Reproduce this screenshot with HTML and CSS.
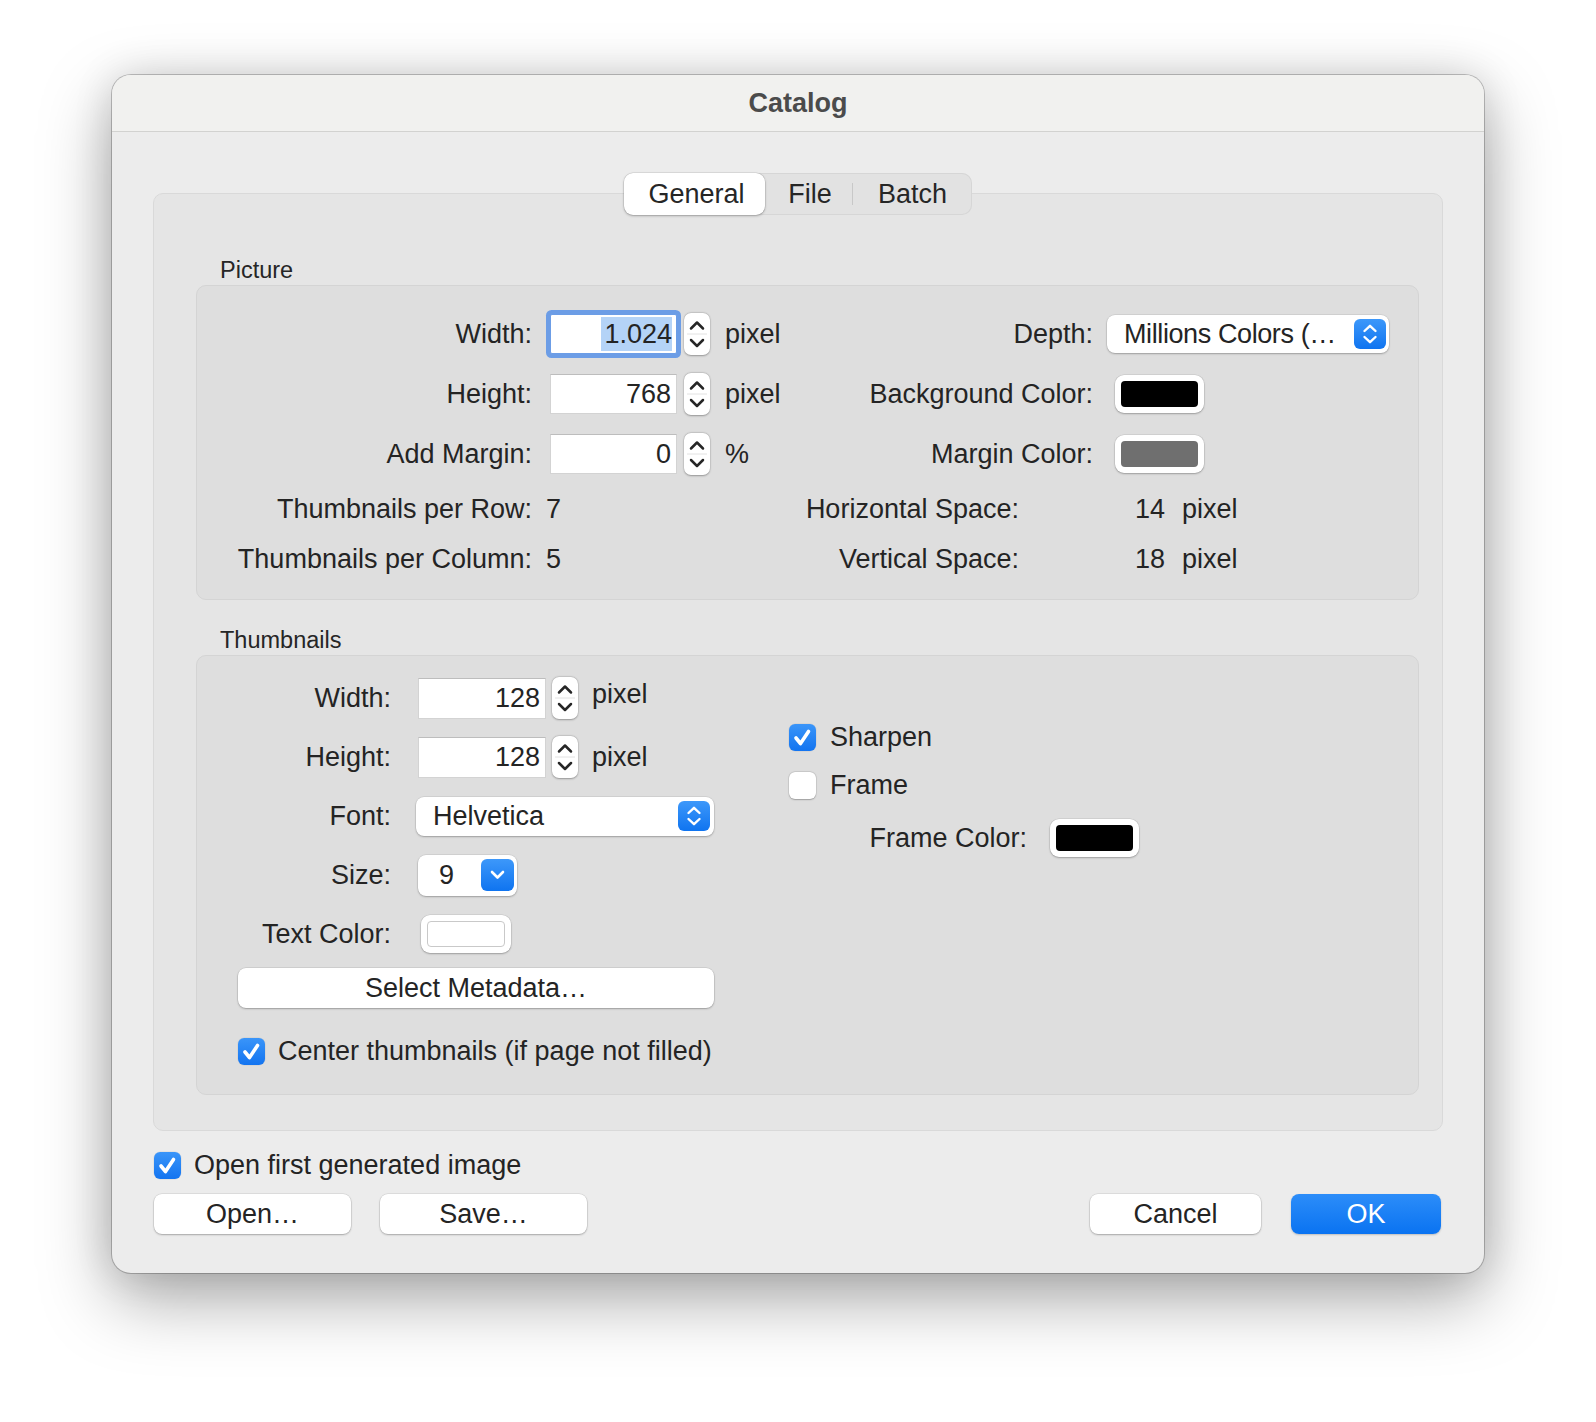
FILE: index.html
```html
<!DOCTYPE html>
<html>
<head>
<meta charset="utf-8">
<title>Catalog</title>
<link rel="stylesheet" href="styles.css">
</head>
<body>
<div class="window">
  <div class="titlebar">Catalog</div>
  <div class="content">
    <div class="tabs">
      <div class="seg">
        <div class="segitem sel">General</div>
        <div class="segitem file">File</div>
        <div class="segsep"></div>
        <div class="segitem batch">Batch</div>
      </div>
    </div>
    <div class="tabbox">
      <div class="glabel">Picture</div>
      <div class="group picture">
        <div class="prow">
          <div class="cell">
            <span class="lab lab-pl">Width:</span>
            <div class="input pin focused"><span class="seltext">1.024</span></div>
            <div class="stepper"><svg width="26" height="42" viewBox="0 0 26 42"><line x1="3" y1="21" x2="23" y2="21" stroke="#e2e2e2" stroke-width="1"/><path d="M7 15.5 L13 9.5 L19 15.5" fill="none" stroke="#262626" stroke-width="2.5" stroke-linecap="round" stroke-linejoin="round"/><path d="M7 27 L13 33 L19 27" fill="none" stroke="#262626" stroke-width="2.5" stroke-linecap="round" stroke-linejoin="round"/></svg></div>
            <span class="unit">pixel</span>
          </div>
          <div class="cell">
            <span class="lab lab-pr">Depth:</span>
            <div class="popup depth"><span class="poptext">Millions Colors (…</span><span class="popbtn"><svg width="32" height="30" viewBox="0 0 32 30"><path d="M10.5 12 L16 6.8 L21.5 12" fill="none" stroke="#fff" stroke-width="2.4" stroke-linecap="round" stroke-linejoin="round"/><path d="M10.5 18 L16 23.2 L21.5 18" fill="none" stroke="#fff" stroke-width="2.4" stroke-linecap="round" stroke-linejoin="round"/></svg></span></div>
          </div>
        </div>
        <div class="prow">
          <div class="cell">
            <span class="lab lab-pl">Height:</span>
            <div class="input pin"><span class="val">768</span></div>
            <div class="stepper"><svg width="26" height="42" viewBox="0 0 26 42"><line x1="3" y1="21" x2="23" y2="21" stroke="#e2e2e2" stroke-width="1"/><path d="M7 15.5 L13 9.5 L19 15.5" fill="none" stroke="#262626" stroke-width="2.5" stroke-linecap="round" stroke-linejoin="round"/><path d="M7 27 L13 33 L19 27" fill="none" stroke="#262626" stroke-width="2.5" stroke-linecap="round" stroke-linejoin="round"/></svg></div>
            <span class="unit">pixel</span>
          </div>
          <div class="cell">
            <span class="lab lab-pr">Background Color:</span>
            <div class="well pwell"><i class="swatch black"></i></div>
          </div>
        </div>
        <div class="prow">
          <div class="cell">
            <span class="lab lab-pl">Add Margin:</span>
            <div class="input pin"><span class="val">0</span></div>
            <div class="stepper"><svg width="26" height="42" viewBox="0 0 26 42"><line x1="3" y1="21" x2="23" y2="21" stroke="#e2e2e2" stroke-width="1"/><path d="M7 15.5 L13 9.5 L19 15.5" fill="none" stroke="#262626" stroke-width="2.5" stroke-linecap="round" stroke-linejoin="round"/><path d="M7 27 L13 33 L19 27" fill="none" stroke="#262626" stroke-width="2.5" stroke-linecap="round" stroke-linejoin="round"/></svg></div>
            <span class="unit">%</span>
          </div>
          <div class="cell">
            <span class="lab lab-pr">Margin Color:</span>
            <div class="well pwell"><i class="swatch gray"></i></div>
          </div>
        </div>
        <div class="prow info first">
          <div class="cell">
            <span class="lab lab-pl">Thumbnails per Row:</span>
            <span class="infoval">7</span>
          </div>
          <div class="cell">
            <span class="lab lab-pr2">Horizontal Space:</span>
            <span class="numval">14</span>
            <span class="unit2">pixel</span>
          </div>
        </div>
        <div class="prow info">
          <div class="cell">
            <span class="lab lab-pl">Thumbnails per Column:</span>
            <span class="infoval">5</span>
          </div>
          <div class="cell">
            <span class="lab lab-pr2">Vertical Space:</span>
            <span class="numval">18</span>
            <span class="unit2">pixel</span>
          </div>
        </div>
      </div>

      <div class="glabel second">Thumbnails</div>
      <div class="group thumbs">
        <div class="tleft">
          <div class="trow">
            <span class="lab lab-tl">Width:</span>
            <div class="input tin"><span class="val">128</span></div>
            <div class="stepper tstep"><svg width="26" height="42" viewBox="0 0 26 42"><line x1="3" y1="21" x2="23" y2="21" stroke="#e2e2e2" stroke-width="1"/><path d="M7 15.5 L13 9.5 L19 15.5" fill="none" stroke="#262626" stroke-width="2.5" stroke-linecap="round" stroke-linejoin="round"/><path d="M7 27 L13 33 L19 27" fill="none" stroke="#262626" stroke-width="2.5" stroke-linecap="round" stroke-linejoin="round"/></svg></div>
            <span class="unit tunit raised">pixel</span>
          </div>
          <div class="trow">
            <span class="lab lab-tl">Height:</span>
            <div class="input tin"><span class="val">128</span></div>
            <div class="stepper tstep"><svg width="26" height="42" viewBox="0 0 26 42"><line x1="3" y1="21" x2="23" y2="21" stroke="#e2e2e2" stroke-width="1"/><path d="M7 15.5 L13 9.5 L19 15.5" fill="none" stroke="#262626" stroke-width="2.5" stroke-linecap="round" stroke-linejoin="round"/><path d="M7 27 L13 33 L19 27" fill="none" stroke="#262626" stroke-width="2.5" stroke-linecap="round" stroke-linejoin="round"/></svg></div>
            <span class="unit tunit">pixel</span>
          </div>
          <div class="trow">
            <span class="lab lab-tl">Font:</span>
            <div class="popup fontpop"><span>Helvetica</span><span class="popbtn"><svg width="32" height="30" viewBox="0 0 32 30"><path d="M10.5 12 L16 6.8 L21.5 12" fill="none" stroke="#fff" stroke-width="2.4" stroke-linecap="round" stroke-linejoin="round"/><path d="M10.5 18 L16 23.2 L21.5 18" fill="none" stroke="#fff" stroke-width="2.4" stroke-linecap="round" stroke-linejoin="round"/></svg></span></div>
          </div>
          <div class="trow">
            <span class="lab lab-tl">Size:</span>
            <div class="popup sizepop"><span>9</span><span class="popbtn sizebtn"><svg width="33" height="32" viewBox="0 0 33 32"><path d="M11 13 L16.5 18.5 L22 13" fill="none" stroke="#fff" stroke-width="2.6" stroke-linecap="round" stroke-linejoin="round"/></svg></span></div>
          </div>
          <div class="trow">
            <span class="lab lab-tl">Text Color:</span>
            <div class="well twell"><i class="swatch white"></i></div>
          </div>
          <div class="btn metabtn">Select Metadata…</div>
          <div class="cbrow centerrow">
            <span class="cb"><svg width="27" height="27" viewBox="0 0 27 27"><path d="M7 14 L11.5 19.5 L19.5 7.5" fill="none" stroke="#fff" stroke-width="3.6" stroke-linecap="round" stroke-linejoin="round"/></svg></span>
            <span class="cbtext">Center thumbnails (if page not filled)</span>
          </div>
        </div>
        <div class="tright">
          <div class="cbrow rcb">
            <span class="cb"><svg width="27" height="27" viewBox="0 0 27 27"><path d="M7 14 L11.5 19.5 L19.5 7.5" fill="none" stroke="#fff" stroke-width="3.6" stroke-linecap="round" stroke-linejoin="round"/></svg></span>
            <span class="cbtext">Sharpen</span>
          </div>
          <div class="cbrow rcb second">
            <span class="cb off"></span>
            <span class="cbtext">Frame</span>
          </div>
          <div class="fcrow">
            <span class="lab lab-fc">Frame Color:</span>
            <div class="well fwell"><i class="swatch black"></i></div>
          </div>
        </div>
      </div>
    </div>

    <div class="cbrow openrow">
      <span class="cb"><svg width="27" height="27" viewBox="0 0 27 27"><path d="M7 14 L11.5 19.5 L19.5 7.5" fill="none" stroke="#fff" stroke-width="3.6" stroke-linecap="round" stroke-linejoin="round"/></svg></span>
      <span class="cbtext">Open first generated image</span>
    </div>
    <div class="buttons">
      <div class="btn openbtn">Open…</div>
      <div class="btn savebtn">Save…</div>
      <div class="spacer"></div>
      <div class="btn cancelbtn">Cancel</div>
      <div class="btn okbtn">OK</div>
    </div>
  </div>
</div>
</body>
</html>
```
FILE: styles.css
```css
html, body {
  margin: 0;
  padding: 0;
  background: #ffffff;
}
body {
  font-family: "Liberation Sans", Arial, Helvetica, sans-serif;
  font-size: 27px;
  color: #242424;
  width: 1596px;
  height: 1422px;
  overflow: hidden;
}
.window {
  margin: 75px 0 0 112px;
  width: 1372px;
  height: 1198px;
  box-sizing: border-box;
  border-radius: 19px;
  background: #ececec;
  overflow: hidden;
  box-shadow: 0 0 0 1px rgba(0,0,0,0.22), 0 26px 70px rgba(0,0,0,0.34), 0 0 40px rgba(0,0,0,0.12);
}
.titlebar {
  height: 57px;
  box-sizing: border-box;
  border-bottom: 1px solid #d2d2d0;
  background: #f1f1ef;
  display: flex;
  align-items: center;
  justify-content: center;
  font-weight: bold;
  color: #4b4b4b;
  font-size: 27px;
}
.content {
  padding: 41px 41px 0 41px;
}
.tabs {
  display: flex;
  justify-content: center;
  height: 42px;
  margin-bottom: -22px;
  position: relative;
  z-index: 1;
}
.seg {
  display: flex;
  align-items: center;
  width: 348px;
  height: 42px;
  box-sizing: border-box;
  border-radius: 10px;
  background: #e2e2e2;
  box-shadow: inset 0 0 0 1px #d6d6d6;
}
.segitem {
  height: 100%;
  display: flex;
  align-items: center;
  justify-content: center;
  color: #262626;
}
.segitem.sel {
  width: 141px;
  background: #ffffff;
  border-radius: 9px;
  box-shadow: 0 1px 2.5px rgba(0,0,0,0.28), 0 0 0 0.5px rgba(0,0,0,0.12);
  padding-left: 4px;
  box-sizing: border-box;
}
.segitem.file { width: 87px; padding-left: 3px; box-sizing: border-box; }
.segsep { width: 1px; height: 22px; background: #c8c8c8; }
.segitem.batch { flex: 1; }

.tabbox {
  height: 938px;
  box-sizing: border-box;
  background: #e5e5e5;
  border: 1px solid #d9d9d9;
  border-radius: 10px;
  padding: 62px 23px 0 42px;
}
.glabel {
  font-size: 23.5px;
  line-height: 28px;
  height: 28px;
  margin-left: 24px;
  color: #262626;
}
.glabel.second { margin-top: 26px; }
.group {
  margin-top: 1px;
  box-sizing: border-box;
  background: #dedede;
  border: 1px solid #d4d4d4;
  border-radius: 10px;
}
.picture {
  height: 315px;
  padding-top: 27px;
}
.prow {
  display: grid;
  grid-template-columns: 600px 1fr;
  align-items: center;
  height: 42px;
}
.prow + .prow { margin-top: 18px; }
.prow.info { height: 30px; margin-top: 20px; }
.prow.info.first { margin-top: 19px; }
.cell {
  display: flex;
  align-items: center;
  height: 100%;
}
.lab {
  flex: none;
  text-align: right;
  white-space: nowrap;
}
.lab-pl { width: 335px; }
.lab-pr { width: 296px; }
.lab-pr2 { width: 222px; }
.lab-tl { width: 194px; }

.input {
  flex: none;
  box-sizing: border-box;
  background: #ffffff;
  border: 1px solid #d3d3d3;
  border-top-color: #bdbdbd;
  display: flex;
  align-items: center;
  justify-content: flex-end;
  padding-right: 4px;
}
.pin { width: 127px; height: 40px; margin-left: 18px; }
.tin { width: 128px; height: 41px; margin-left: 27px; }
.input.focused {
  border-color: #6c9de6;
  border-radius: 2px;
  box-shadow: 0 0 0 4px #6c9de6;
}
.seltext {
  background: #b4d3f7;
  line-height: 34px;
  padding-left: 3px;
}
.val { padding-right: 1px; }
.stepper {
  flex: none;
  width: 26px;
  height: 42px;
  margin-left: 7px;
  background: #ffffff;
  border-radius: 7px;
  box-shadow: 0 0.5px 2px rgba(0,0,0,0.3), 0 0 0 0.5px rgba(0,0,0,0.08);
}
.stepper svg { display: block; }
.tstep { margin-left: 6px; }
.unit { margin-left: 15px; }
.tunit { margin-left: 14px; }
.raised { margin-bottom: 8px; }
.infoval { margin-left: 14px; }
.numval { width: 146px; text-align: right; flex: none; }
.unit2 { margin-left: 17px; }

.popup {
  flex: none;
  box-sizing: border-box;
  background: #ffffff;
  border-radius: 8px;
  box-shadow: 0 1px 2px rgba(0,0,0,0.25), 0 0 0 0.5px rgba(0,0,0,0.1);
  display: flex;
  align-items: center;
  justify-content: space-between;
  white-space: nowrap;
}
.poptext { letter-spacing: -0.4px; }
.popbtn {
  width: 32px;
  height: 30px;
  border-radius: 6px;
  background: linear-gradient(#3d98fa, #0f74f0);
  display: flex;
  align-items: center;
  justify-content: center;
  flex: none;
}
.popbtn svg { display: block; }
.depth {
  width: 282px;
  height: 38px;
  margin-left: 14px;
  padding: 0 3px 0 17px;
}
.fontpop {
  width: 298px;
  height: 39px;
  margin-left: 25px;
  padding: 0 4px 0 17px;
}
.sizepop {
  width: 99px;
  height: 41px;
  margin-left: 27px;
  padding: 0 3px 0 21px;
}
.sizebtn { width: 33px; height: 32px; }

.well {
  flex: none;
  box-sizing: border-box;
  background: #ffffff;
  border-radius: 9px;
  box-shadow: 0 1px 2px rgba(0,0,0,0.25), 0 0 0 0.5px rgba(0,0,0,0.1);
  padding: 6px;
}
.pwell { width: 89px; height: 38px; margin-left: 22px; }
.twell { width: 90px; height: 38px; margin-left: 30px; }
.fwell { width: 89px; height: 38px; margin-left: 23px; }
.swatch {
  display: block;
  height: 100%;
  border-radius: 4px;
  box-sizing: border-box;
}
.swatch.black { background: #000000; }
.swatch.gray { background: #6f6f6f; }
.swatch.white { background: #ffffff; border: 1px solid #c9c9c9; }

.thumbs {
  height: 440px;
  display: flex;
}
.tleft {
  width: 559px;
  flex: none;
  padding-top: 21px;
  display: flex;
  flex-direction: column;
}
.trow {
  display: flex;
  align-items: center;
  height: 42px;
}
.trow + .trow { margin-top: 17px; }
.tright {
  flex: 1;
  padding-top: 67px;
}

.btn {
  box-sizing: border-box;
  height: 40px;
  background: #ffffff;
  border-radius: 8px;
  box-shadow: 0 1px 2px rgba(0,0,0,0.25), 0 0 0 0.5px rgba(0,0,0,0.12);
  display: flex;
  align-items: center;
  justify-content: center;
  color: #242424;
  flex: none;
}
.metabtn {
  width: 476px;
  margin: 13px 0 0 41px;
}

.cbrow {
  display: flex;
  align-items: center;
  height: 28px;
}
.cb {
  flex: none;
  width: 27px;
  height: 27px;
  box-sizing: border-box;
  border-radius: 6px;
  background: linear-gradient(#3a95f9, #1374f0);
  box-shadow: 0 0 0 0.5px rgba(0,0,0,0.08);
  display: flex;
  align-items: center;
  justify-content: center;
}
.cb svg { display: block; }
.cb.off {
  background: #ffffff;
  box-shadow: 0 0.5px 1.5px rgba(0,0,0,0.25), 0 0 0 0.5px rgba(0,0,0,0.1);
}
.cbtext { margin-left: 13px; white-space: nowrap; }
.centerrow { margin: 29px 0 0 41px; }
.rcb { margin-left: 33px; }
.rcb .cbtext { margin-left: 14px; }
.rcb.second { margin-top: 20px; }
.fcrow {
  display: flex;
  align-items: center;
  height: 38px;
  margin-top: 20px;
}
.lab-fc { width: 271px; }

.openrow {
  margin: 20px 0 0 1px;
}
.buttons {
  display: flex;
  margin-top: 15px;
  padding: 0 2px 0 1px;
}
.openbtn { width: 197px; }
.savebtn { width: 207px; margin-left: 29px; }
.spacer { flex: 1; }
.cancelbtn { width: 171px; }
.okbtn {
  width: 150px;
  margin-left: 30px;
  background: linear-gradient(#2c8df9, #0a73f1);
  color: #ffffff;
  box-shadow: 0 1px 2px rgba(0,0,0,0.2);
}
```
